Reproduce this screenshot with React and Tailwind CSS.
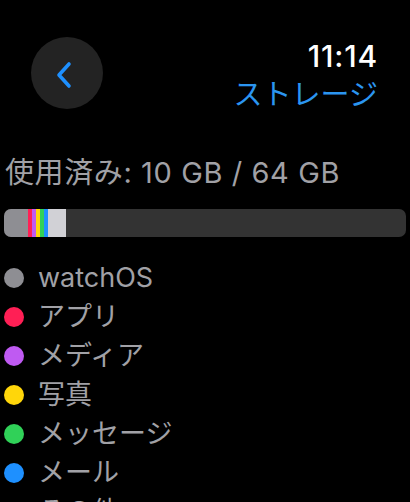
const items = [
  { label: 'watchOS', color: 'bg-[#8e8e93]' },
  { label: 'アプリ', color: 'bg-[#ff1f55]' },
  { label: 'メディア', color: 'bg-[#bf5af2]' },
  { label: '写真', color: 'bg-[#ffd60a]' },
  { label: 'メッセージ', color: 'bg-[#30d158]' },
  { label: 'メール', color: 'bg-[#1e90ff]' },
  { label: 'その他', color: 'bg-[#d1d1d6]' },
];

const App = () => {
  return (
    <div
      className="w-[410px] h-[502px] overflow-hidden bg-black text-white"
      style={{ fontFamily: 'Inter, "Noto Sans CJK JP", sans-serif' }}
    >
      {/* header */}
      <div className="flex items-start justify-between pl-[31px] pr-[32px] pt-[37px]">
        <button className="flex items-center justify-center w-[72px] h-[72px] rounded-full bg-[#232323]">
          <svg width="20" height="28" viewBox="0 0 20 28" className="mr-[6px] mt-[3px]">
            <path
              d="M15 3 L5 14 L15 25"
              fill="none"
              stroke="#1e90ff"
              strokeWidth="3.6"
              strokeLinecap="round"
              strokeLinejoin="round"
            />
          </svg>
        </button>
        <div className="flex flex-col items-end">
          <span className="text-[30px] leading-[34px] font-medium tracking-[0.8px] mt-[2px]">11:14</span>
          <span className="text-[29px] leading-[38px] text-[#2b95f0] mt-[3px]">ストレージ</span>
        </div>
      </div>

      {/* usage */}
      <div className="px-[4px] mt-[40px]">
        <p className="pl-[1px] text-[29px] leading-[38px] text-[#a1a1a6] tracking-[0.6px]">使用済み: 10 GB / 64 GB</p>
        <div className="flex h-[28px] mt-[17px] rounded-[7px] bg-[#333333] overflow-hidden">
          <div className="w-[24px] bg-[#8e8e93]"></div>
          <div className="w-[4px] bg-[#ff1f55]"></div>
          <div className="w-[4px] bg-[#bf5af2]"></div>
          <div className="w-[4px] bg-[#ffd60a]"></div>
          <div className="w-[4px] bg-[#30d158]"></div>
          <div className="w-[4px] bg-[#1e90ff]"></div>
          <div className="w-[18px] bg-[#d1d1d6]"></div>
        </div>
      </div>

      {/* legend */}
      <div className="flex flex-col mt-[21px] pl-[4px]">
        {items.map((item) => (
          <div key={item.label} className="flex items-center h-[39px]">
            <span className={`w-[20px] h-[20px] rounded-full ${item.color}`}></span>
            <span className="ml-[14px] text-[27px] leading-[36px] text-[#a1a1a6]">{item.label}</span>
          </div>
        ))}
      </div>
    </div>
  );
};

export default App;
